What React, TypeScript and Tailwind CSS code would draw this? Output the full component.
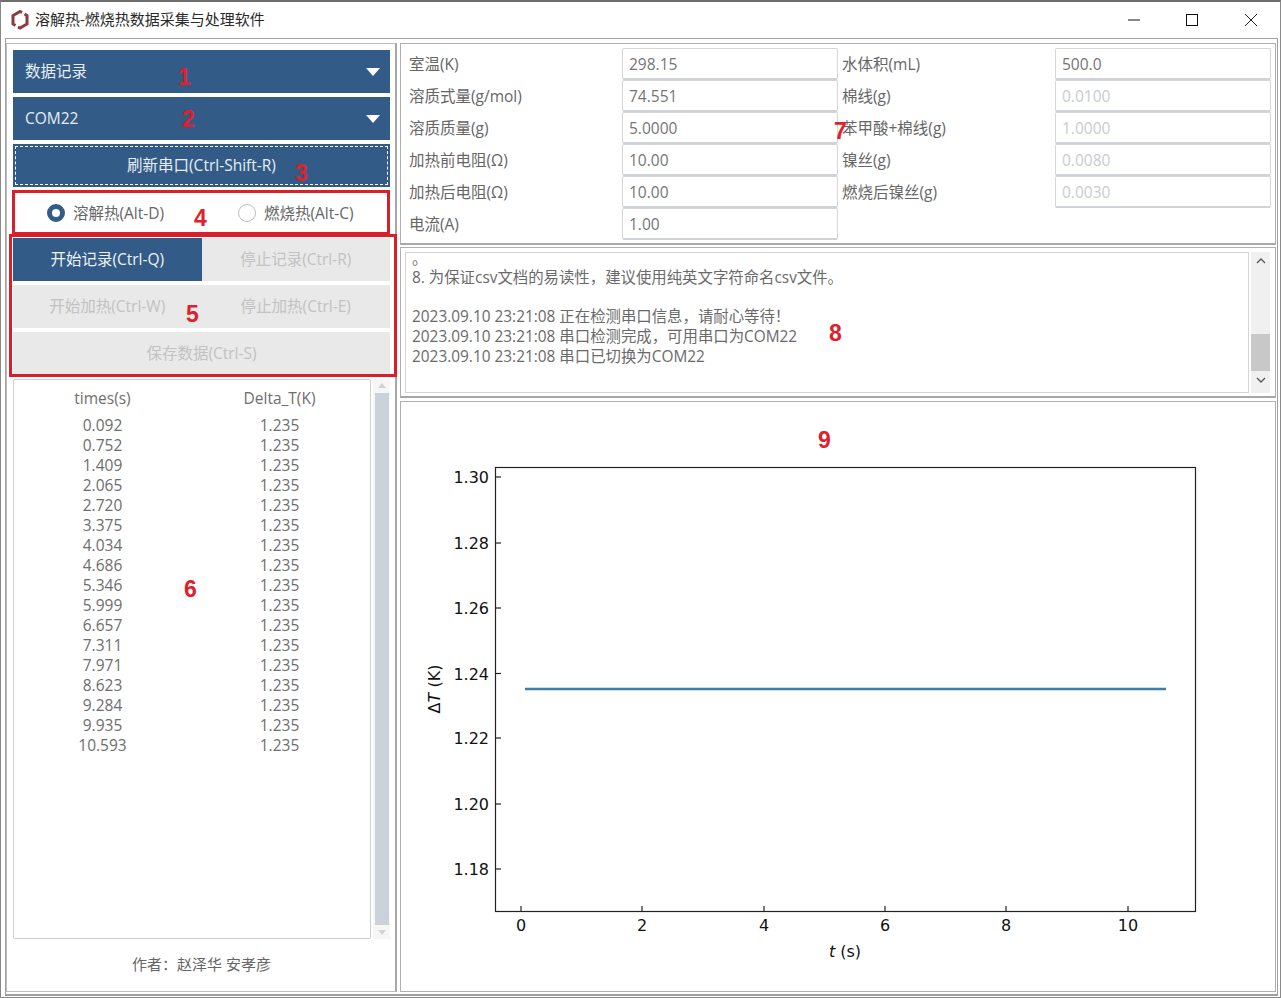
import React from "react";

const FONT = "font-['Open_Sans','Noto_Sans_CJK_SC',sans-serif]";

const rows: [string, string][] = [
  ["0.092", "1.235"], ["0.752", "1.235"], ["1.409", "1.235"], ["2.065", "1.235"], ["2.720", "1.235"],
  ["3.375", "1.235"], ["4.034", "1.235"], ["4.686", "1.235"], ["5.346", "1.235"], ["5.999", "1.235"],
  ["6.657", "1.235"], ["7.311", "1.235"], ["7.971", "1.235"], ["8.623", "1.235"], ["9.284", "1.235"],
  ["9.935", "1.235"], ["10.593", "1.235"],
];

const form: { l: string; v: string; off?: boolean }[][] = [
  [{ l: "室温(K)", v: "298.15" }, { l: "水体积(mL)", v: "500.0" }],
  [{ l: "溶质式量(g/mol)", v: "74.551" }, { l: "棉线(g)", v: "0.0100", off: true }],
  [{ l: "溶质质量(g)", v: "5.0000" }, { l: "苯甲酸+棉线(g)", v: "1.0000", off: true }],
  [{ l: "加热前电阻(Ω)", v: "10.00" }, { l: "镍丝(g)", v: "0.0080", off: true }],
  [{ l: "加热后电阻(Ω)", v: "10.00" }, { l: "燃烧后镍丝(g)", v: "0.0030", off: true }],
  [{ l: "电流(A)", v: "1.00" }],
];

function Select({ label }: { label: string }) {
  return (
    <div className="h-[43px] bg-[#325c87] text-[#e8edf2] flex items-center justify-between pl-3 pr-[10px]">
      <span className="mb-[1px]">{label}</span>
      <svg width="14" height="8" viewBox="0 0 14 8"><polygon points="0,0 14,0 7,8" fill="#ffffff" /></svg>
    </div>
  );
}

function Action({ label, active }: { label: string; active?: boolean }) {
  return (
    <div className={"h-[43px] flex-1 flex items-center justify-center pb-[1px] " + (active ? "bg-[#325c87] text-[#eef2f6]" : "bg-[#e9e9e9] text-[#c2c2c2]")}>
      {label}
    </div>
  );
}

function Field({ v, off }: { v: string; off?: boolean }) {
  return (
    <div className={"h-[32px] w-[216px] bg-white border border-[#d6d6d6] border-b-2 border-b-[#cfd2d6] rounded-[2px] pl-[6px] flex items-center " + (off ? "text-[#c8ccd0]" : "text-[#757575]")}>
      {v}
    </div>
  );
}

function Num({ n, cls }: { n: string; cls: string }) {
  return <span className={"absolute font-['Liberation_Sans',sans-serif] font-bold text-[23px] leading-none text-[#e0202a] " + cls}>{n}</span>;
}

function Chart() {
  const xt = [[521, "0"], [642, "2"], [764, "4"], [885, "6"], [1006, "8"], [1128, "10"]] as const;
  const yt = [[477, "1.30"], [543, "1.28"], [608, "1.26"], [673.5, "1.24"], [738, "1.22"], [804, "1.20"], [869, "1.18"]] as const;
  const ff = "'DejaVu Sans', sans-serif";
  return (
    <svg className="block w-[874px] h-[589px]" viewBox="401 402 874 589">
      <rect x="495.5" y="467.5" width="700" height="444" fill="none" stroke="#222" strokeWidth="1.2" />
      {xt.map(([x, t]) => (
        <g key={t}>
          <line x1={x} x2={x} y1="906" y2="911" stroke="#222" strokeWidth="1.2" />
          <text x={x} y="931" textAnchor="middle" fontFamily={ff} fontSize="16" fill="#111">{t}</text>
        </g>
      ))}
      {yt.map(([y, t]) => (
        <g key={t}>
          <line x1="495" x2="501" y1={y} y2={y} stroke="#222" strokeWidth="1.2" />
          <text x="489" y={y + 6} textAnchor="end" fontFamily={ff} fontSize="16" fill="#111">{t}</text>
        </g>
      ))}
      <line x1="525" x2="1166" y1="689" y2="689" stroke="#3f7ea8" strokeWidth="2.6" />
      <text x="845" y="957" textAnchor="middle" fontFamily={ff} fontSize="16" fill="#111"><tspan fontStyle="italic">t</tspan> (s)</text>
      <text transform="translate(440 689) rotate(-90)" textAnchor="middle" fontFamily={ff} fontSize="16" fill="#111">Δ<tspan fontStyle="italic">T</tspan> (K)</text>
    </svg>
  );
}

export default function App() {
  return (
    <div className={"relative w-[1281px] h-[998px] bg-white flex flex-col overflow-hidden border border-[#8a8a8a] border-t-2 border-t-[#6e6e6e] text-[15.5px] leading-5 " + FONT}>
      {/* title bar */}
      <div className="h-[36px] shrink-0 flex items-center pl-[10px] text-[#333]">
        <svg width="18" height="20" viewBox="0 0 18 20" className="mr-[6px]">
          <path d="M11 2.500 L9 1.500 L2 5.500 L2 14 L4.500 15.500" fill="none" stroke="#8c3a3f" strokeWidth="3" />
          <path d="M7 17 L9 18 L16 14 L16 5.500 L13.500 4" fill="none" stroke="#8c3a3f" strokeWidth="3" />
        </svg>
        <span className="text-[15px] text-[#2a2a2a] mb-[2px]">溶解热-燃烧热数据采集与处理软件</span>
        <div className="ml-auto flex items-center">
          <svg width="58" height="14" viewBox="0 0 58 14"><line x1="25" x2="37" y1="7" y2="7" stroke="#111" /></svg>
          <svg width="59" height="14" viewBox="0 0 59 14"><rect x="25.500" y="1.500" width="11" height="11" fill="none" stroke="#111" /></svg>
          <svg width="60" height="14" viewBox="0 0 60 14"><path d="M25 1 L37 13 M37 1 L25 13" stroke="#222" fill="none" /></svg>
        </div>
      </div>

      {/* body */}
      <div className="flex-1 min-h-0 ml-[4px] mr-[2px] mb-[1px] border border-[#a0a0a0] border-b-2 flex gap-[3px] pr-[1px] pt-[4px] pb-[2px]">
        {/* left */}
        <div className="w-[391px] shrink-0 border border-[#bdbdbd] border-r-2 border-r-[#a8a8a8] pl-[6px] pr-[5px] pt-[6px] flex flex-col text-[#666]">
          <div className="flex flex-col gap-[4px]">
            <Select label="数据记录" />
            <Select label="COM22" />
            <div className="h-[43px] bg-[#325c87] text-[#e8edf2] p-[2px]">
              <div className="h-full border border-dashed border-white flex items-center justify-center pb-[1px]">刷新串口(Ctrl-Shift-R)</div>
            </div>
          </div>
          <div className="h-[51px] shrink-0 flex items-center pl-[34px]">
            <span className="w-[18px] h-[18px] rounded-full border-[5px] border-[#325c87] bg-white" />
            <span className="ml-[8px] w-[165px]">溶解热(Alt-D)</span>
            <span className="w-[18px] h-[18px] rounded-full border border-[#bdbdbd] bg-white" />
            <span className="ml-[8px]">燃烧热(Alt-C)</span>
          </div>
          <div className="flex flex-col gap-[4px]">
            <div className="flex"><Action label="开始记录(Ctrl-Q)" active /><Action label="停止记录(Ctrl-R)" /></div>
            <div className="flex"><Action label="开始加热(Ctrl-W)" /><Action label="停止加热(Ctrl-E)" /></div>
            <div className="flex"><Action label="保存数据(Ctrl-S)" /></div>
          </div>
          <div className="mt-[4px] h-[560px] shrink-0 flex gap-[2px]">
            <div className="w-[358px] border border-[#cfcfcf] rounded-[2px] pt-[8px]">
              <div className="grid grid-cols-2 w-[354px] text-center pb-[7px] text-[#6e6e6e]">
                <span>times(s)</span>
                <span>Delta_T(K)</span>
              </div>
              {rows.map(([a, b]) => (
                <div key={a} className="grid grid-cols-2 w-[354px] text-center text-[#6e6e6e]">
                  <span>{a}</span>
                  <span>{b}</span>
                </div>
              ))}
            </div>
            <div className="w-[17px] bg-[#f6f6f6] flex flex-col items-center">
              <svg width="10" height="14" viewBox="0 0 10 14"><polygon points="1,9 9,9 5,4" fill="#cfd3d8" /></svg>
              <div className="w-[14px] flex-1 bg-[#ccd2da]" />
              <svg width="10" height="14" viewBox="0 0 10 14"><polygon points="1,5 9,5 5,10" fill="#cfd3d8" /></svg>
            </div>
          </div>
          <div className="flex-1 flex items-center justify-center text-[15px] text-[#666] pb-[2px]">作者：赵泽华 安孝彦</div>
        </div>

        {/* right */}
        <div className="flex-1 min-w-0 flex flex-col gap-[2px]">
          <div className="h-[202px] shrink-0 border border-[#b0b0b0] border-b-2 border-b-[#a8a8a8] pl-[8px] pt-[4px]">
            {form.map((r, i) => (
              <div key={i} className="flex items-center h-[32px]">
                <span className="w-[213px] text-[#666]">{r[0].l}</span>
                <Field v={r[0].v} />
                {r[1] && (
                  <>
                    <span className="w-[217px] pl-[4px] text-[#666]">{r[1].l}</span>
                    <Field v={r[1].v} off={r[1].off} />
                  </>
                )}
              </div>
            ))}
          </div>
          <div className="h-[151px] shrink-0 border border-[#b0b0b0] border-b-2 border-b-[#a8a8a8] pl-[4px] pr-[5px] pt-[4px] pb-[3px] flex gap-[2px]">
            <div className="flex-1 border border-[#d4d4d4] pl-[6px] pt-[1px] text-[#6a6a6a] text-[15.4px] overflow-hidden">
              <div className="h-[14px] leading-[10px]">。</div>
              <div>8. 为保证csv文档的易读性，建议使用纯英文字符命名csv文件。</div>
              <div className="h-[19px]" />
              <div>2023.09.10 23:21:08 正在检测串口信息，请耐心等待！</div>
              <div>2023.09.10 23:21:08 串口检测完成，可用串口为COM22</div>
              <div>2023.09.10 23:21:08 串口已切换为COM22</div>
            </div>
            <div className="w-[19px] bg-[#f0f0f0] flex flex-col items-center">
              <svg width="10" height="16" viewBox="0 0 10 16" className="mt-[1px]"><path d="M1 10 L5 6 L9 10" fill="none" stroke="#555" strokeWidth="1.300" /></svg>
              <div className="h-[37px] w-full bg-[#c8c8c8] mt-[65px]" />
              <svg width="10" height="16" viewBox="0 0 10 16" className="mt-[1px]"><path d="M1 6 L5 10 L9 6" fill="none" stroke="#555" strokeWidth="1.300" /></svg>
            </div>
          </div>
          <div className="flex-1 min-h-0 border border-[#b0b0b0] mt-[1px]">
            <Chart />
          </div>
        </div>
      </div>

      {/* annotation overlays */}
      <div className="absolute left-[11px] top-[188px] w-[378px] h-[45px] border-[3px] border-[#d9202a]" />
      <div className="absolute left-[8px] top-[232px] w-[388px] h-[143px] border-[3px] border-[#d9202a]" />
      <Num n="1" cls="left-[177px] top-[64px]" />
      <Num n="2" cls="left-[181px] top-[106px]" />
      <Num n="3" cls="left-[294px] top-[160px]" />
      <Num n="4" cls="left-[193px] top-[205px]" />
      <Num n="5" cls="left-[185px] top-[301px]" />
      <Num n="6" cls="left-[183px] top-[576px]" />
      <Num n="7" cls="left-[833px] top-[118px]" />
      <Num n="8" cls="left-[828px] top-[320px]" />
      <Num n="9" cls="left-[817px] top-[427px]" />
    </div>
  );
}
